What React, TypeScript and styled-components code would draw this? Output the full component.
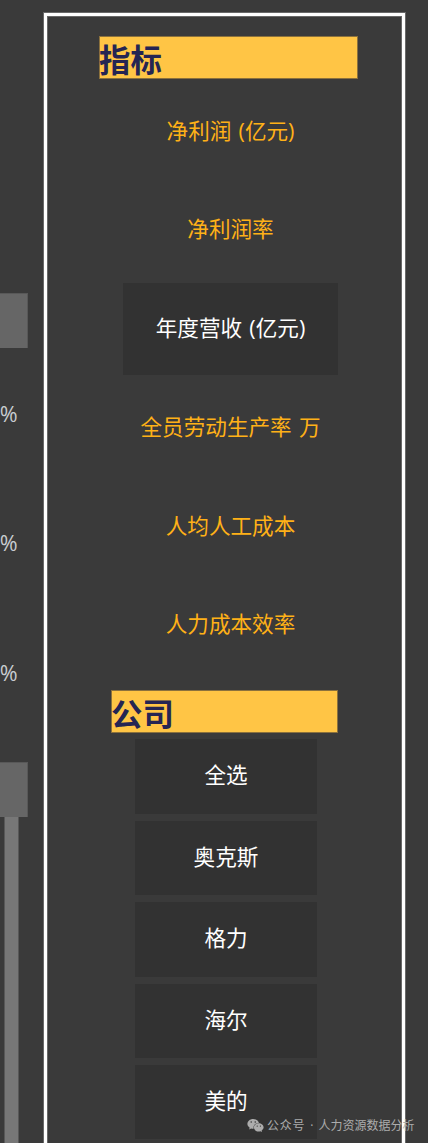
import React from 'react';
import styled, { createGlobalStyle } from 'styled-components';
import { FaWeixin } from 'react-icons/fa';

const GlobalStyle = createGlobalStyle`
  * { box-sizing: border-box; }
  html, body { margin: 0; background: #3a3a3a; }
  body { overflow: hidden; }
`;

const Page = styled.main`
  position: relative;
  display: flex;
  width: 428px;
  height: 1143px;
  overflow: hidden;
  background: #3a3a3a;
  color: #fff;
  font-family: 'Open Sans', 'Noto Sans CJK SC', sans-serif;
  font-size: 21.6px;
`;

const Rail = styled.aside`
  flex: none;
  width: 44px;
  padding-top: 293px;
  display: flex;
  flex-direction: column;
`;

const RailBar = styled.div`
  flex: none;
  width: 28px;
  height: 55px;
  background: #666;
  border: solid #585858;
  border-width: 1px 1px 0 0;
`;

const Percentages = styled.div`
  flex: none;
  height: 414px;
  padding-top: 1px;
`;

const Percentage = styled.div`
  width: 17.5px;
  height: 129.4px;
  line-height: 130px;
  display: flex;
  justify-content: flex-end;
  color: #c8ccd0;
`;

const RailStem = styled.div`
  flex: 1;
  width: 15px;
  margin-left: 4px;
  background: #777;
  border: solid #585858;
  border-width: 0 1px;
`;

const Panel = styled.section`
  flex: none;
  width: 361px;
  height: 1160px;
  margin-top: 13px;
  padding-top: 20px;
  border: 3px solid #fff;
  box-shadow: 0 0 0 1px #696969, inset 0 0 0 1px #696969;
`;

const Heading = styled.h2<{ $width: number; $left: number }>`
  margin: 0 0 0 ${(p) => p.$left}px;
  width: ${(p) => p.$width}px;
  height: 43px;
  line-height: 46px;
  border: 1px solid #8b713d;
  background: #ffc545;
  color: #252553;
  font-size: 31.4px;
  font-weight: 700;
  text-indent: -1px;
`;

const Options = styled.ul<{ $kind: 'metric' | 'company' }>`
  list-style: none;
  padding: 0;
  display: flex;
  flex-direction: column;
  width: ${(p) => (p.$kind === 'metric' ? 215 : 182)}px;
  margin: ${(p) => (p.$kind === 'metric' ? '6.8px 0 18.6px 76px' : '6.2px 0 0 88px')};
  gap: 7px;
`;

const Option = styled.li<{ $height: number; $filled?: boolean; $accent?: boolean }>`
  flex: none;
  height: ${(p) => p.$height}px;
  display: flex;
  align-items: center;
  justify-content: center;
  padding-bottom: 2.4px;
  white-space: nowrap;
  word-spacing: 1.6px;
  line-height: 30px;
  background: ${(p) => (p.$filled ? '#323232' : 'transparent')};
  color: ${(p) => (p.$accent ? '#ffb117' : '#fff')};
`;

const Watermark = styled.div`
  position: absolute;
  left: 247px;
  top: 1115.5px;
  height: 20px;
  display: flex;
  align-items: center;
  color: #acacac;
  font-size: 12px;
  line-height: 20px;
  white-space: nowrap;
`;

const Channel = styled.span`
  margin-left: 3px;
  letter-spacing: 0.8px;
`;

const Dot = styled.span`
  width: 13px;
  text-align: center;
`;

const metrics = ['净利润 (亿元)', '净利润率', '年度营收 (亿元)', '全员劳动生产率 万', '人均人工成本', '人力成本效率'];
const companies = ['全选', '奥克斯', '格力', '海尔', '美的'];
const selected = '年度营收 (亿元)';

export default function App() {
  return (
    <Page>
      <GlobalStyle />
      <Rail>
        <RailBar />
        <Percentages>
          <Percentage>%</Percentage>
          <Percentage>%</Percentage>
          <Percentage>%</Percentage>
        </Percentages>
        <RailBar />
        <RailStem />
      </Rail>
      <Panel>
        <Heading $left={52} $width={259}>指标</Heading>
        <Options $kind="metric">
          {metrics.map((m) => (
            <Option key={m} $height={91.8} $filled={m === selected} $accent={m !== selected}>
              {m}
            </Option>
          ))}
        </Options>
        <Heading $left={64} $width={227}>公司</Heading>
        <Options $kind="company">
          {companies.map((c) => (
            <Option key={c} $height={74.4} $filled>
              {c}
            </Option>
          ))}
        </Options>
      </Panel>
      <Watermark>
        <FaWeixin size={17} />
        <Channel>公众号</Channel>
        <Dot>·</Dot>
        <span>人力资源数据分析</span>
      </Watermark>
    </Page>
  );
}
